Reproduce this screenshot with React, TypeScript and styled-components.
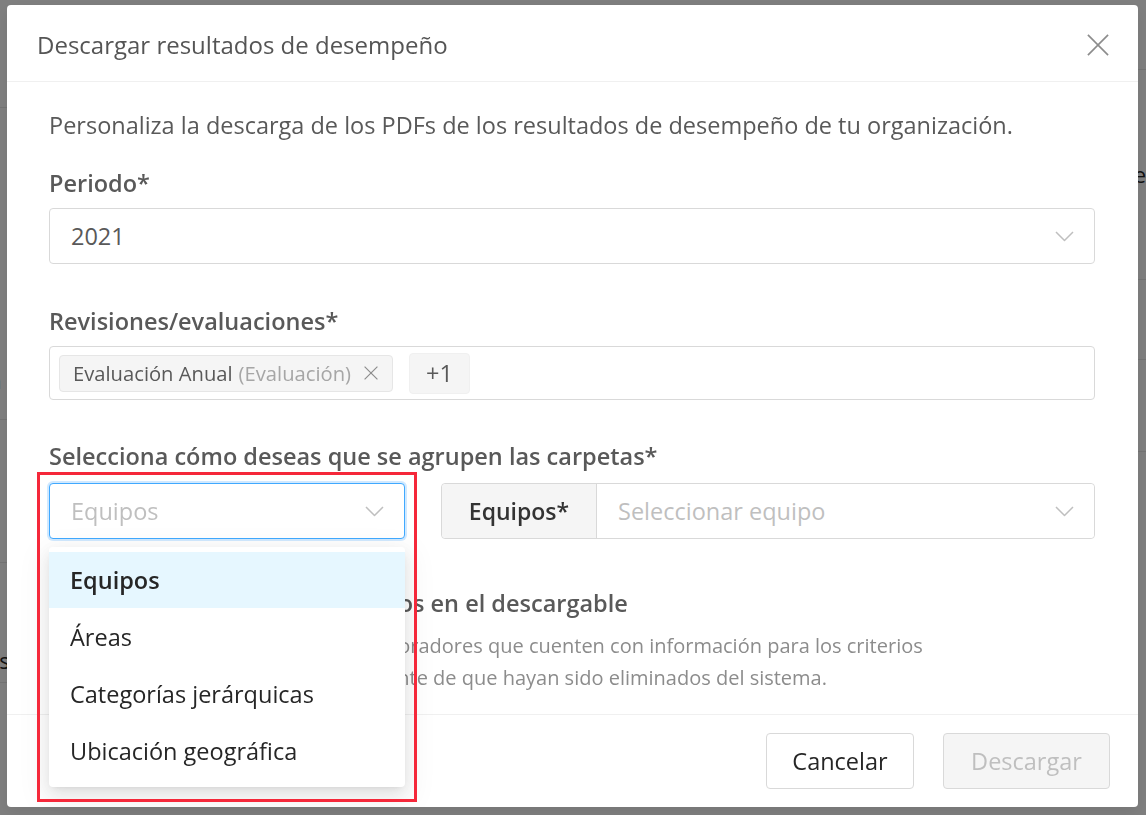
import React from "react";
import styled, { createGlobalStyle } from "styled-components";

const GlobalStyle = createGlobalStyle`
  html, body { margin: 0; padding: 0; }
  body {
    font-family: "Open Sans", "Noto Sans", "Liberation Sans", sans-serif;
    width: 1146px;
    height: 815px;
    overflow: hidden;
    background: #ffffff;
  }
  * { box-sizing: border-box; }
`;

/* ---------- background page ---------- */
const Page = styled.div`
  display: flex;
  width: 1146px;
  height: 815px;
  background: #ffffff;
`;

const Pane = styled.div<{ $w?: number }>`
  display: flex;
  flex-direction: column;
  width: ${(p) => (p.$w ? `${p.$w}px` : "auto")};
  flex: ${(p) => (p.$w ? "none" : "1")};
`;

const BgRow = styled.div<{ $h: number; $align?: string }>`
  height: ${(p) => p.$h}px;
  border-bottom: 1px solid #e8e8e8;
  display: flex;
  align-items: center;
  justify-content: ${(p) => p.$align || "flex-start"};
  font-size: 22px;
  color: #262626;
  flex: none;
`;

const BgText = styled.span<{ $shift: number; $pt?: number; $pb?: number }>`
  margin-left: ${(p) => p.$shift}px;
  padding-top: ${(p) => p.$pt || 0}px;
  padding-bottom: ${(p) => p.$pb || 0}px;
`;

const Mask = styled.div`
  position: fixed;
  inset: 0;
  background: rgba(0, 0, 0, 0.5);
`;

/* ---------- modal ---------- */
const ModalWrap = styled.div`
  position: fixed;
  inset: 0;
  padding: 5px 0 0 7px;
`;

const Modal = styled.div`
  width: 1131px;
  height: 802px;
  background: #ffffff;
  border-radius: 4px;
  display: flex;
  flex-direction: column;
  box-shadow: 0 6px 16px rgba(0, 0, 0, 0.08);
`;

const Header = styled.div`
  height: 77px;
  flex: none;
  display: flex;
  align-items: center;
  justify-content: space-between;
  padding: 0 27px 0 30px;
  border-bottom: 1px solid #f0f0f0;
`;

const Title = styled.div`
  font-size: 24px;
  color: #555555;
  font-weight: 400;
  padding-top: 2px;
`;

const CloseButton = styled.button`
  width: 26px;
  height: 26px;
  border: none;
  background: transparent;
  padding: 0;
  display: flex;
  align-items: center;
  justify-content: center;
  cursor: pointer;
  margin-top: 4px;
`;

const Body = styled.div`
  flex: 1;
  padding: 27px 43px 0 42px;
  display: flex;
  flex-direction: column;
`;

const Intro = styled.p`
  margin: 0;
  font-size: 23.5px;
  line-height: 32px;
  color: #595959;
`;

const Field = styled.div<{ $mt: number }>`
  margin-top: ${(p) => p.$mt}px;
  display: flex;
  flex-direction: column;
`;

const Label = styled.div`
  font-size: 23.5px;
  line-height: 32px;
  font-weight: 600;
  color: #595959;
  margin-bottom: 9px;
`;

const SelectBox = styled.div<{ $focused?: boolean; $grow?: boolean; $flat?: boolean }>`
  position: relative;
  height: ${(p) => (p.$flat ? "100%" : "56px")};
  flex: ${(p) => (p.$grow ? "1" : "none")};
  border: ${(p) => (p.$flat ? "none" : `1px solid ${p.$focused ? "#40a9ff" : "#d9d9d9"}`)};
  border-radius: ${(p) => (p.$flat ? "0 4px 4px 0" : "4px")};
  box-shadow: ${(p) => (p.$focused ? "0 0 0 2px rgba(24, 144, 255, 0.2)" : "none")};
  background: #ffffff;
  display: flex;
  align-items: center;
  justify-content: space-between;
  padding: 0 20px 0 21px;
`;

const Value = styled.span<{ $placeholder?: boolean }>`
  font-size: 23.5px;
  color: ${(p) => (p.$placeholder ? "#bfbfbf" : "#595959")};
`;

const MultiBox = styled.div`
  height: 54px;
  border: 1px solid #d9d9d9;
  border-radius: 4px;
  display: flex;
  align-items: center;
  gap: 16px;
  padding: 0 9px;
`;

const Tag = styled.div<{ $compact?: boolean }>`
  height: ${(p) => (p.$compact ? "41px" : "37px")};
  display: flex;
  align-items: center;
  gap: 6px;
  padding: ${(p) => (p.$compact ? "0 16px" : "0 14px 0 13px")};
  background: #f5f5f5;
  border: 1px solid ${(p) => (p.$compact ? "#f0f0f0" : "#e6e6e6")};
  border-radius: 4px;
  font-size: 20.2px;
  color: #595959;
`;

const TagMuted = styled.span`
  color: #a6a6a6;
`;

const TagClose = styled.span`
  display: flex;
  align-items: center;
  margin-left: 7px;
`;

const PlusText = styled.span`
  font-size: 23.5px;
  color: #595959;
`;

const GroupRow = styled.div`
  display: flex;
  align-items: center;
  gap: 36px;
  margin-top: 2px;
`;

const SelectAnchor = styled.div`
  position: relative;
  width: 356px;
  flex: none;
  display: flex;
  flex-direction: column;
`;

const InputGroup = styled.div`
  flex: 1;
  display: flex;
  height: 56px;
  border: 1px solid #d9d9d9;
  border-radius: 4px;
`;

const Addon = styled.div`
  width: 155px;
  flex: none;
  background: #f5f5f5;
  border-right: 1px solid #d9d9d9;
  border-radius: 4px 0 0 4px;
  display: flex;
  align-items: center;
  justify-content: center;
  font-size: 23px;
  font-weight: 600;
  color: #333333;
`;

const Dropdown = styled.div`
  position: absolute;
  left: 0;
  top: calc(100% + 8px);
  width: 356px;
  background: #ffffff;
  border-radius: 4px;
  padding: 5px 0 8px;
  box-shadow: 0 3px 6px -4px rgba(0, 0, 0, 0.12), 0 6px 16px 0 rgba(0, 0, 0, 0.08),
    0 9px 28px 8px rgba(0, 0, 0, 0.05);
  z-index: 2;
`;

const Option = styled.div<{ $active?: boolean }>`
  height: ${(p) => (p.$active ? "56px" : "57px")};
  display: flex;
  align-items: center;
  padding: 0 21px;
  font-size: 23.5px;
  color: #262626;
  font-weight: ${(p) => (p.$active ? 600 : 400)};
  background: ${(p) => (p.$active ? "#e6f7ff" : "transparent")};
`;

const Highlight = styled.div`
  position: absolute;
  left: -12px;
  top: -11px;
  width: 380px;
  height: 330px;
  border: 3px solid #f5283a;
  pointer-events: none;
  z-index: 3;
`;

const OptionBlock = styled.div`
  margin-top: 48px;
  display: flex;
  gap: 14px;
`;

const Check = styled.div`
  width: 28px;
  height: 28px;
  flex: none;
  border: 1px solid #d9d9d9;
  border-radius: 3px;
  margin-top: 2px;
`;

const OptionText = styled.div`
  display: flex;
  flex-direction: column;
`;

const OptionTitle = styled.div`
  font-size: 23.5px;
  line-height: 32px;
  font-weight: 600;
  color: #595959;
  white-space: nowrap;
`;

const OptionDesc = styled.div`
  margin-top: 11px;
  font-size: 20px;
  line-height: 32px;
  color: #8c8c8c;
`;

const DescLine = styled.span`
  display: block;
  white-space: nowrap;
`;

const Footer = styled.div`
  height: 93px;
  flex: none;
  border-top: 1px solid #f0f0f0;
  display: flex;
  align-items: center;
  justify-content: flex-end;
  gap: 29px;
  padding: 0 28px 0 0;
`;

const Button = styled.button<{ $disabled?: boolean; $w: number }>`
  height: 56px;
  width: ${(p) => p.$w}px;
  font-family: inherit;
  font-size: 23.5px;
  border-radius: 4px;
  border: 1px solid #d9d9d9;
  background: ${(p) => (p.$disabled ? "#f5f5f5" : "#ffffff")};
  color: ${(p) => (p.$disabled ? "#bfbfbf" : "#262626")};
  cursor: ${(p) => (p.$disabled ? "not-allowed" : "pointer")};
  padding: 0;
`;

/* ---------- icons ---------- */
const Chevron = ({ color = "#bfbfbf" }: { color?: string }) => (
  <svg width="19" height="11" viewBox="0 0 19 11" fill="none">
    <polyline points="1,1 9.5,9.5 18,1" stroke={color} strokeWidth="1.5" strokeLinejoin="round" />
  </svg>
);

const XIcon = ({ size, color, w }: { size: number; color: string; w: number }) => (
  <svg width={size} height={size} viewBox="0 0 24 24" fill="none">
    <line x1="1" y1="1" x2="23" y2="23" stroke={color} strokeWidth={w} />
    <line x1="23" y1="1" x2="1" y2="23" stroke={color} strokeWidth={w} />
  </svg>
);

export default function App() {
  const options = ["Equipos", "Áreas", "Categorías jerárquicas", "Ubicación geográfica"];
  return (
    <>
      <GlobalStyle />
      <Page>
        <Pane $w={120}>
          <BgRow $h={108} />
          <BgRow $h={312}>
            <BgText $shift={-12} $pt={232}>n</BgText>
          </BgRow>
          <BgRow $h={143} />
          <BgRow $h={120}>
            <BgText $shift={-14} $pt={74}>os</BgText>
          </BgRow>
        </Pane>
        <Pane>
          <BgRow $h={70} />
          <BgRow $h={108} $align="flex-end">
            <BgText $shift={0} $pt={100}>e</BgText>
          </BgRow>
          <BgRow $h={102} />
          <BgRow $h={80} />
          <BgRow $h={92} />
        </Pane>
      </Page>
      <Mask />
      <ModalWrap>
        <Modal>
          <Header>
            <Title>Descargar resultados de desempeño</Title>
            <CloseButton aria-label="Cerrar">
              <XIcon size={22} color="#8c8c8c" w={1.8} />
            </CloseButton>
          </Header>
          <Body>
            <Intro>
              Personaliza la descarga de los PDFs de los resultados de desempeño de tu organización.
            </Intro>
            <Field $mt={26}>
              <Label>Periodo*</Label>
              <SelectBox>
                <Value>2021</Value>
                <Chevron />
              </SelectBox>
            </Field>
            <Field $mt={41}>
              <Label>Revisiones/evaluaciones*</Label>
              <MultiBox>
                <Tag>
                  Evaluación Anual <TagMuted>(Evaluación)</TagMuted>
                  <TagClose>
                    <XIcon size={14} color="#8c8c8c" w={2} />
                  </TagClose>
                </Tag>
                <Tag $compact>
                  <PlusText>+1</PlusText>
                </Tag>
              </MultiBox>
            </Field>
            <Field $mt={40}>
              <Label>Selecciona cómo deseas que se agrupen las carpetas*</Label>
              <GroupRow>
                <SelectAnchor>
                  <SelectBox $focused>
                    <Value $placeholder>Equipos</Value>
                    <Chevron />
                  </SelectBox>
                  <Dropdown>
                    {options.map((o, i) => (
                      <Option key={o} $active={i === 0}>
                        {o}
                      </Option>
                    ))}
                  </Dropdown>
                  <Highlight />
                </SelectAnchor>
                <InputGroup>
                  <Addon>Equipos*</Addon>
                  <SelectBox $flat $grow>
                    <Value $placeholder>Seleccionar equipo</Value>
                    <Chevron />
                  </SelectBox>
                </InputGroup>
              </GroupRow>
            </Field>
            <OptionBlock>
              <Check />
              <OptionText>
                <OptionTitle>Incluir empleados eliminados en el descargable</OptionTitle>
                <OptionDesc>
                  <DescLine>
                    Se incluirán los PDFs de los colaboradores que cuenten con información para los criterios
                  </DescLine>
                  <DescLine>
                    seleccionados, independientemente de que hayan sido eliminados del sistema.
                  </DescLine>
                </OptionDesc>
              </OptionText>
            </OptionBlock>
          </Body>
          <Footer>
            <Button $w={148}>Cancelar</Button>
            <Button $w={167} $disabled>
              Descargar
            </Button>
          </Footer>
        </Modal>
      </ModalWrap>
    </>
  );
}
